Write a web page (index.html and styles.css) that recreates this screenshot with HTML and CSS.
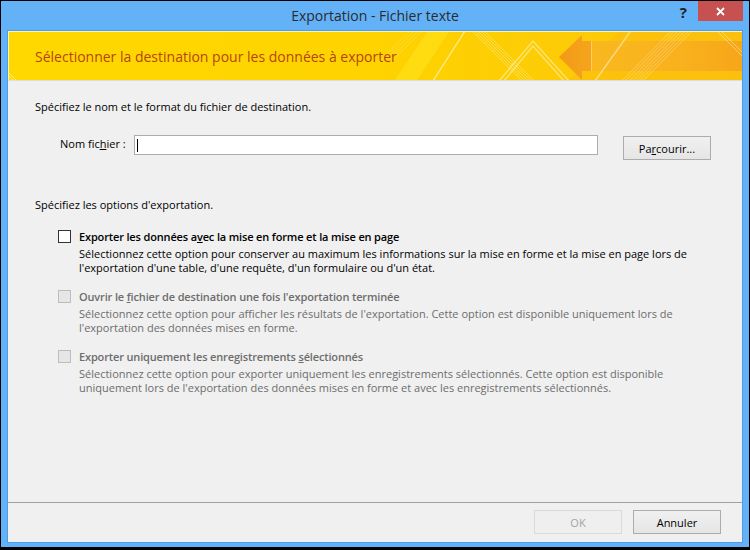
FILE: index.html
```html
<!DOCTYPE html>
<html lang="fr">
<head>
<meta charset="utf-8">
<title>Exportation - Fichier texte</title>
<link rel="stylesheet" href="styles.css">
</head>
<body>
<div class="window">
  <div class="titlebar">
    <div class="tb-spacer"></div>
    <div class="tb-title">Exportation - Fichier texte</div>
    <div class="tb-controls">
      <span class="help">?</span>
      <span class="close"><svg width="9" height="9" viewBox="0 0 9 9"><path d="M1 1L8 8M8 1L1 8" stroke="#fff" stroke-width="1.8" fill="none"/></svg></span>
    </div>
  </div>
  <div class="client">
    <div class="banner">
      <svg class="banner-art" viewBox="0 0 733 48" preserveAspectRatio="none">
        <defs>
          <linearGradient id="bg" x1="0" x2="1" y1="0" y2="0">
            <stop offset="0" stop-color="#ffd800"/>
            <stop offset="0.5" stop-color="#fed300"/>
            <stop offset="1" stop-color="#fbc40c"/>
          </linearGradient>
          <linearGradient id="head" x1="0" x2="1" y1="0" y2="0">
            <stop offset="0" stop-color="#f39818"/>
            <stop offset="1" stop-color="#f5a21b"/>
          </linearGradient>
          <linearGradient id="shaft" x1="0" x2="1" y1="0" y2="0">
            <stop offset="0" stop-color="#f9b81f"/>
            <stop offset="0.6" stop-color="#f9b11d"/>
            <stop offset="1" stop-color="#f7a619"/>
          </linearGradient>
        </defs>
        <rect x="0" y="0" width="733" height="48" fill="url(#bg)"/>
        <polygon points="560,48 610,0 733,0 733,48" fill="#fbbd10" opacity="0.6"/>
        <polygon points="386,48 418,0 440,0 408,48" fill="#ffe21c" opacity="0.6"/>
        <g stroke="#fff" fill="none">
          <path d="M0 41L7 48M0 44L4 48" stroke-opacity="0.5"/>
          <path d="M370 30L400 0M374 30L404 0M378 30L408 0M382 30L412 0" stroke-opacity="0.18"/>
          <path d="M424 49L456 -1" stroke-opacity="0.55" stroke-width="1.3"/>
          <path d="M463 -1L513 49M466 -1L516 49M469 -1L519 49M472 -1L522 49M475 -1L525 49" stroke-opacity="0.3"/>
          <path d="M490 49L524 9L560 49M495 49L524 14L555 49" stroke-opacity="0.45" stroke-width="1.4"/>
        </g>
        <polygon points="550,25 573,3 573,48" fill="url(#head)"/>
        <rect x="573" y="9" width="9" height="30" fill="#f5a31c"/>
        <rect x="582" y="9" width="1" height="30" fill="#fdd05a"/>
        <rect x="583" y="9" width="150" height="30" fill="url(#shaft)"/>
        <g stroke="#fff" fill="none">
          <path d="M586 49L621 0" stroke-opacity="0.45" stroke-width="1.5"/>
          <path d="M613 49L662 -1M616.5 49L665.5 -1M620 49L669 -1M623.5 49L672.5 -1M627 49L676 -1M630.5 49L679.5 -1M634 49L683 -1" stroke-opacity="0.28"/>
          <path d="M708 -1L733 24M712 -1L733 20" stroke-opacity="0.4"/>
        </g>
      </svg>
      <div class="banner-text">Sélectionner la destination pour les données à exporter</div>
    </div>
    <div class="body">
      <p class="intro intro-file">Spécifiez le nom et le format du fichier de destination.</p>
      <div class="file-row">
        <span class="file-label">Nom fic<u>h</u>ier :</span>
        <div class="file-input"><span class="caret"></span></div>
        <button class="btn browse" type="button">Pa<u>r</u>courir...</button>
      </div>
      <p class="intro intro-options">Spécifiez les options d'exportation.</p>
      <div class="options">
        <div class="option">
          <span class="check"></span>
          <div class="opt-text">
            <div class="opt-label">Exporter les données a<u>v</u>ec la mise en forme et la mise en page</div>
            <div class="opt-desc">
              <div class="desc-line">Sélectionnez cette option pour conserver au maximum les informations sur la mise en forme et la mise en page lors de</div>
              <div class="desc-line">l'exportation d'une table, d'une requête, d'un formulaire ou d'un état.</div>
            </div>
          </div>
        </div>
        <div class="option disabled">
          <span class="check"></span>
          <div class="opt-text">
            <div class="opt-label">Ouvrir le <u>f</u>ichier de destination une fois l'exportation terminée</div>
            <div class="opt-desc">
              <div class="desc-line">Sélectionnez cette option pour afficher les résultats de l'exportation. Cette option est disponible uniquement lors de</div>
              <div class="desc-line">l'exportation des données mises en forme.</div>
            </div>
          </div>
        </div>
        <div class="option disabled">
          <span class="check"></span>
          <div class="opt-text">
            <div class="opt-label">Exporter uniquement les enregistrements <u>s</u>électionnés</div>
            <div class="opt-desc">
              <div class="desc-line">Sélectionnez cette option pour exporter uniquement les enregistrements sélectionnés. Cette option est disponible</div>
              <div class="desc-line">uniquement lors de l'exportation des données mises en forme et avec les enregistrements sélectionnés.</div>
            </div>
          </div>
        </div>
      </div>
    </div>
    <div class="footer">
      <button class="btn" type="button" disabled>OK</button>
      <button class="btn" type="button">Annuler</button>
    </div>
  </div>
</div>
</body>
</html>
```
FILE: styles.css
```css
html, body {
  margin: 0;
  padding: 0;
}

body {
  font-family: "Open Sans", "Noto Sans", "Liberation Sans", sans-serif;
  font-size: 11px;
  color: #000;
}

.window {
  width: 750px;
  height: 550px;
  box-sizing: border-box;
  border: 1px solid #000;
  border-bottom-width: 3px;
  background: #63b2f8;
  padding: 0 6px 4px 6px;
  display: flex;
  flex-direction: column;
}

.titlebar {
  height: 29px;
  flex: 0 0 29px;
  display: grid;
  grid-template-columns: 1fr auto 1fr;
}

.tb-title {
  font-size: 14px;
  line-height: 30px;
  color: #2b2b2b;
  white-space: nowrap;
}

.tb-controls {
  justify-self: end;
  display: flex;
  align-items: flex-start;
}

.help {
  font-weight: 700;
  font-size: 15px;
  line-height: 22px;
  color: #222;
  margin-right: 11px;
}

.close {
  width: 45px;
  height: 20px;
  background: #c75050;
  display: flex;
  align-items: center;
  justify-content: center;
}

.close svg {
  display: block;
}

.client {
  flex: 0 0 513px;
  box-sizing: border-box;
  border: 1px solid #4a9de6;
  background: #f0f0f0;
  display: flex;
  flex-direction: column;
}

.banner {
  position: relative;
  height: 50px;
  flex: 0 0 50px;
  box-sizing: border-box;
  border-top: 1px solid #fff3b0;
  border-left: 1px solid #fff3b0;
  border-bottom: 1px solid #dedede;
  background: #ffd800;
  display: flex;
  align-items: center;
  padding-left: 26px;
  overflow: hidden;
}

.banner-art {
  position: absolute;
  left: 0;
  top: 0;
  width: 733px;
  height: 48px;
}

.banner-text {
  position: relative;
  font-size: 14px;
  color: #b4450f;
  white-space: nowrap;
}

.body {
  display: flex;
  flex-direction: column;
  padding-left: 27px;
}

.intro {
  margin: 0;
  line-height: 15px;
}

.intro-file {
  margin-top: 18px;
}

.file-row {
  margin-top: 21px;
  margin-left: 25px;
  height: 25px;
  display: flex;
  align-items: flex-start;
}

.file-label {
  width: 74px;
  line-height: 16px;
  padding-top: 1px;
}

.file-input {
  width: 464px;
  height: 20px;
  box-sizing: border-box;
  border: 1px solid #abadb3;
  background: #fff;
  padding-left: 2px;
  display: flex;
  align-items: center;
}

.caret {
  width: 1px;
  height: 13px;
  background: #000;
}

.btn {
  width: 88px;
  height: 24px;
  box-sizing: border-box;
  border: 1px solid #acacac;
  background: linear-gradient(#f0f0f0, #e5e5e5);
  font-family: inherit;
  font-size: 11px;
  color: #000;
  padding: 0;
  margin: 0;
}

.btn:disabled {
  border-color: #d9d9d9;
  background: #efefef;
  color: #a3a3a3;
}

.browse {
  margin-left: 25px;
  margin-top: 1px;
}

.intro-options {
  margin-top: 37px;
}

.options {
  margin-top: 17px;
  margin-left: 23px;
  display: flex;
  flex-direction: column;
  gap: 14px;
}

.option {
  display: grid;
  grid-template-columns: 13px 1fr;
  column-gap: 8px;
}

.check {
  width: 13px;
  height: 13px;
  box-sizing: border-box;
  border: 1px solid #333;
  background: #fff;
  margin-top: 1px;
}

.option.disabled {
  color: #6d6d6d;
}

.option.disabled .check {
  border-color: #bcbcbc;
  background: #e6e6e6;
}

.opt-label {
  font-weight: 600;
  letter-spacing: -0.15px;
  line-height: 15px;
  white-space: nowrap;
}

.opt-desc {
  margin-top: 3px;
  display: flex;
  flex-direction: column;
}

.desc-line {
  height: 14px;
  line-height: 14px;
  white-space: nowrap;
}

.footer {
  margin-top: auto;
  border-top: 1px solid #a0a0a0;
  padding: 7px 21px 8px 0;
  display: flex;
  justify-content: flex-end;
  gap: 11px;
}
```
